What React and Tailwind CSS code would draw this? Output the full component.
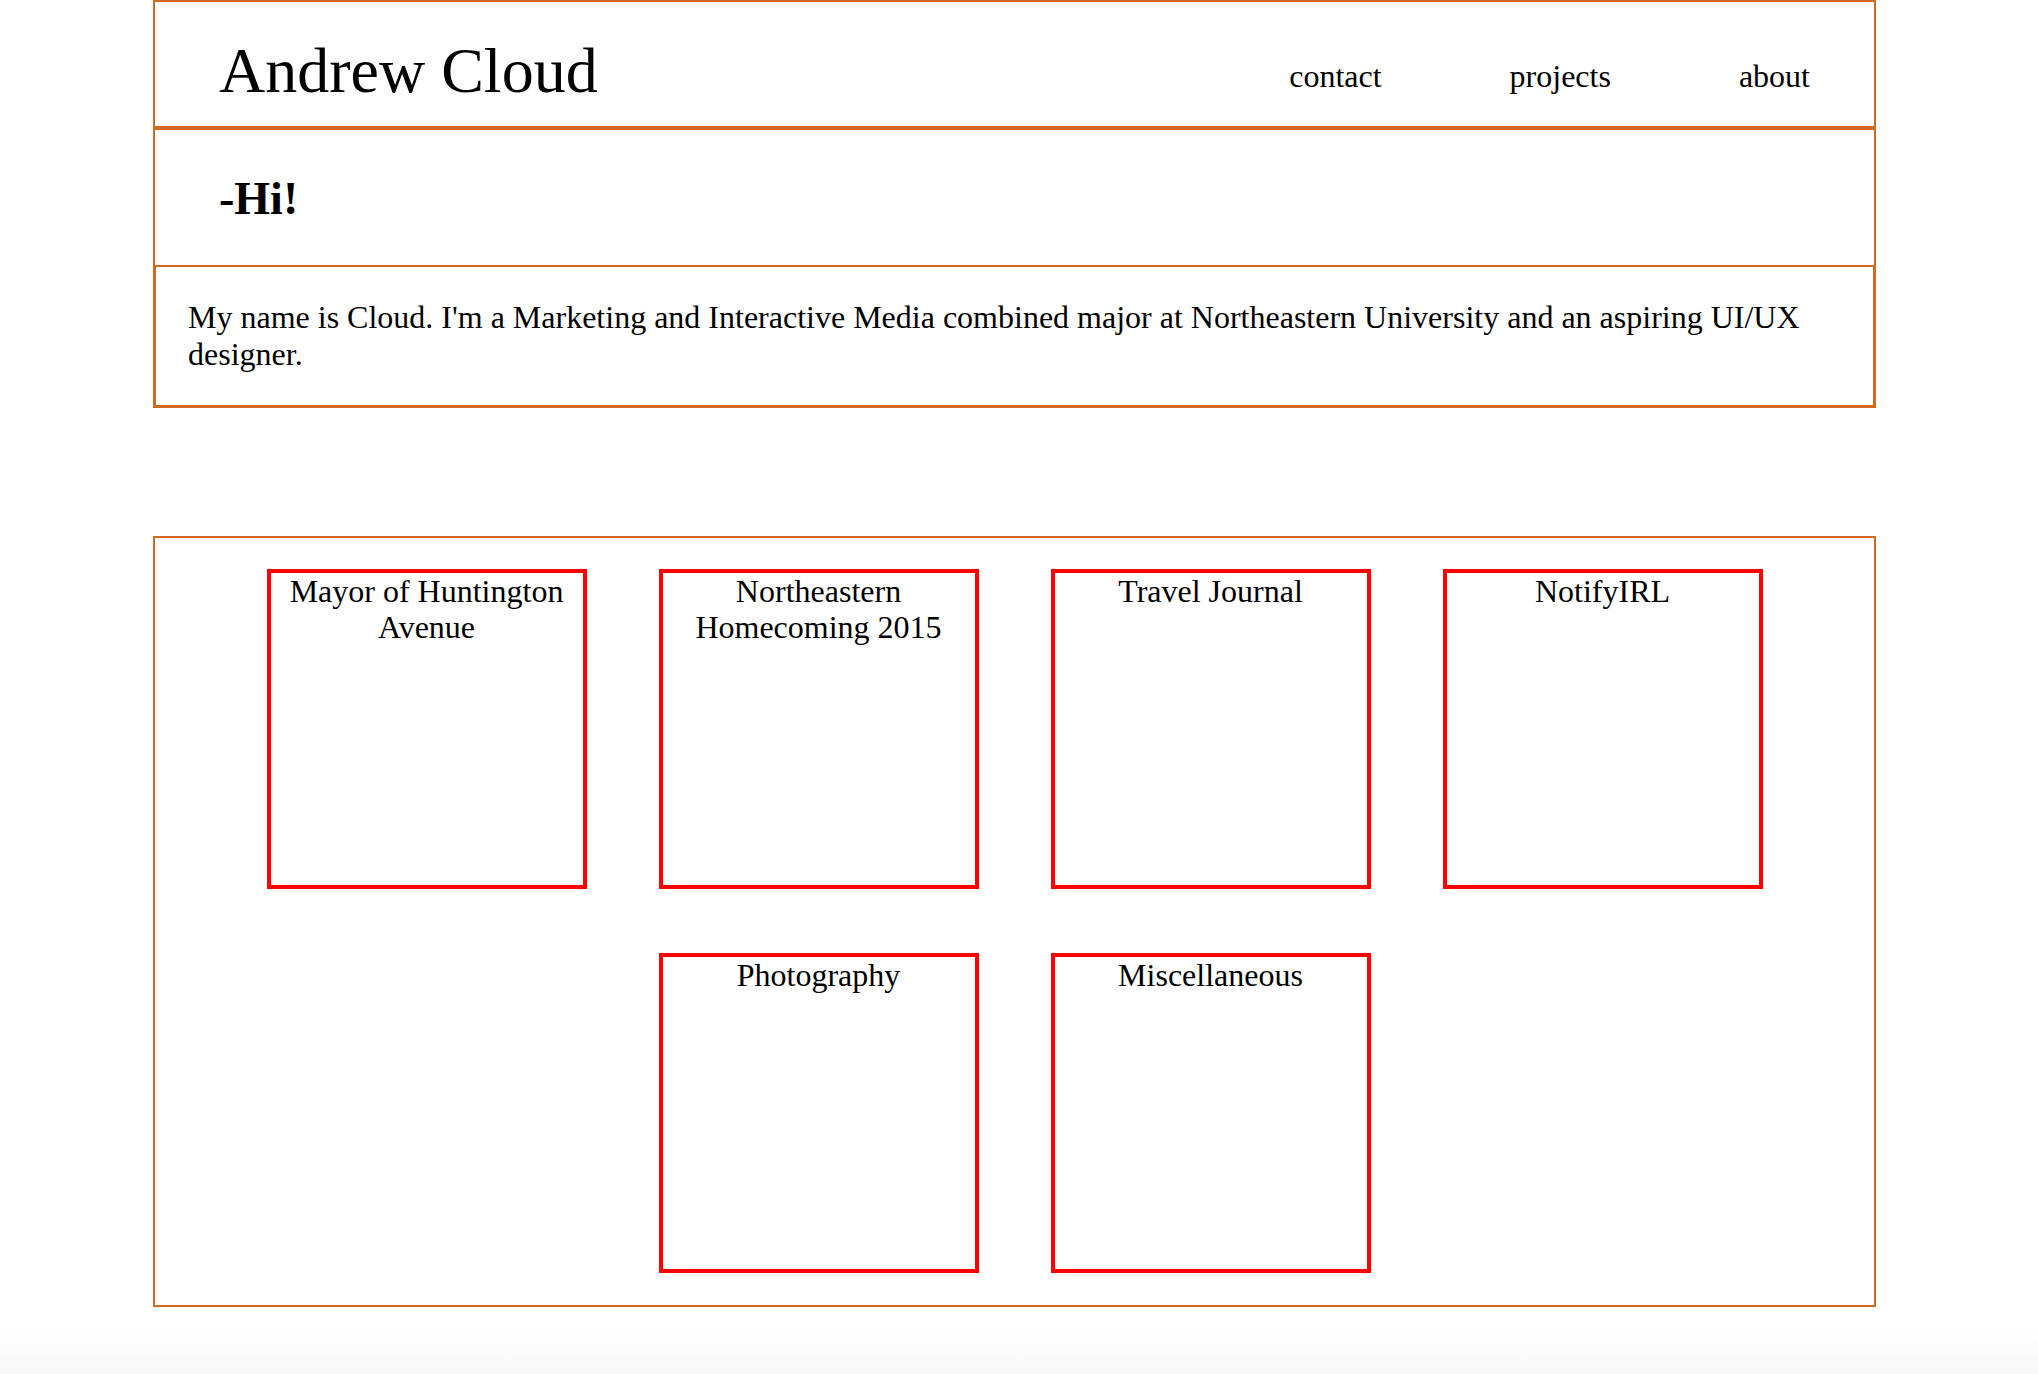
import React from 'react';

const projects = [
  'Mayor of Huntington Avenue',
  'Northeastern Homecoming 2015',
  'Travel Journal',
  'NotifyIRL',
  'Photography',
  'Miscellaneous',
];

function ProjectCard({ title }) {
  return (
    <div className="w-[320px] h-[320px] border-4 border-[#ff0000] text-center text-[32px] leading-[1.149] px-2">
      {title}
    </div>
  );
}

export default function App() {
  return (
    <div
      className="min-h-screen flex flex-col bg-white text-black"
      style={{ fontFamily: '"Liberation Serif", "Times New Roman", serif' }}
    >
      <div className="ml-[153px] w-[1723px]">
        {/* header */}
        <header className="h-[128px] border-2 border-[#d2691e] flex items-start pt-[32px] pl-[64px]">
          <h1 className="text-[64px] leading-[1.149] font-normal">Andrew Cloud</h1>
          <nav className="ml-auto mt-[24px] flex text-[32px] leading-[1.149]">
            <a className="px-16" href="#contact">contact</a>
            <a className="px-16" href="#projects">projects</a>
            <a className="px-16" href="#about">about</a>
          </nav>
        </header>

        {/* intro */}
        <section className="h-[139px] border-2 border-t-2 border-[#d2691e] pt-[43px] pl-[64px]">
          <h2 className="text-[46px] leading-[1.149] font-bold">-Hi!</h2>
        </section>
        <div className="border-[3px] border-t-0 border-[#d2691e] p-[32px] text-[32px] leading-[1.149]">
          My name is Cloud. I'm a Marketing and Interactive Media combined major at Northeastern
          University and an aspiring UI/UX designer.
        </div>

        {/* projects */}
        <div className="mt-[128px] border-2 border-[#d2691e] pt-[31px] pb-[32px] flex flex-wrap justify-center gap-x-[72px] gap-y-[64px]">
          {projects.map((p) => (
            <ProjectCard key={p} title={p} />
          ))}
        </div>
      </div>
      <div className="flex-1" />
      <div className="h-[44px] bg-gradient-to-b from-white to-[#f7f7f7]" />
    </div>
  );
}
